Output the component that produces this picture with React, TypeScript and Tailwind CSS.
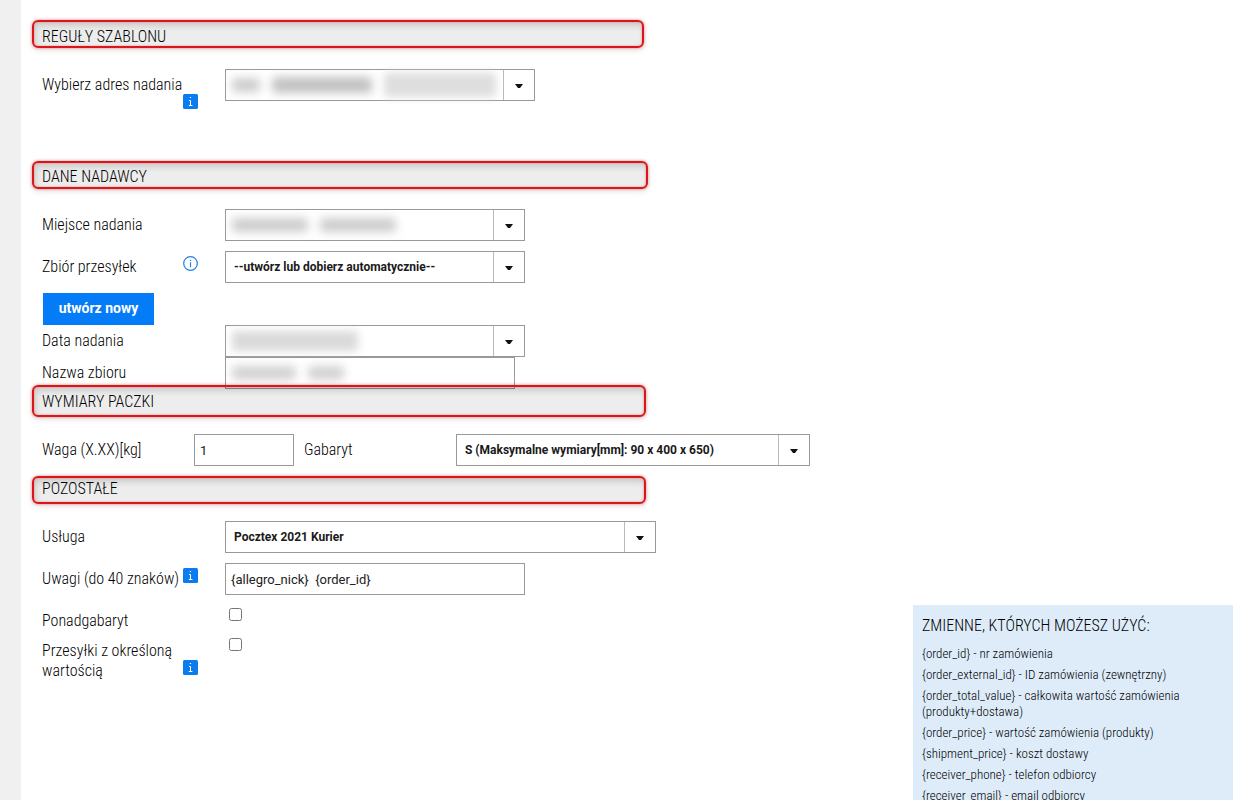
import type { ReactNode } from "react";

const LABEL = "font-['Roboto_Condensed','Roboto',sans-serif] font-light text-[16px] leading-5 text-black";

function Banner({ children, className = "" }: { children: ReactNode; className?: string }) {
  return (
    <h2
      className={`relative -ml-[10px] flex items-center rounded-md border-2 border-[#d9161b] bg-black/7 pl-2 shadow-[0_0_3px_rgba(230,60,60,0.6),0_2px_6px_rgba(0,0,0,0.12),inset_0_0_2px_rgba(240,90,80,0.7),inset_2px_4px_6px_rgba(0,0,0,0.14)] ${LABEL} ${className}`}
    >
      {children}
    </h2>
  );
}

function InfoBadge({ className = "" }: { className?: string }) {
  return (
    <svg role="img" aria-label="Informacja" viewBox="0 0 15 15" className={`size-[15px] ${className}`}>
      <rect width="15" height="15" rx="1.5" fill="#0a7cf0" />
      <path d="M6 6.5h1.5v4.5M5.8 11.5h3.6M6.8 3.5h1.3" stroke="#fff" strokeWidth="1" fill="none" />
    </svg>
  );
}

function InfoCircle({ className = "" }: { className?: string }) {
  return (
    <svg role="img" aria-label="Informacja" viewBox="0 0 15 15" className={`size-[15px] ${className}`}>
      <circle cx="7.5" cy="7.5" r="6.8" stroke="#2381e3" strokeWidth="1.2" fill="none" />
      <path d="M7.5 6.2v5M7.5 3.7v1.4" stroke="#2381e3" strokeWidth="1.2" />
    </svg>
  );
}

type RowProps = {
  id: string;
  label: ReactNode;
  icon?: ReactNode;
  children: ReactNode;
  className?: string;
  labelPadding?: string;
};

function Row({ id, label, icon, children, className = "", labelPadding = "pt-[6px]" }: RowProps) {
  return (
    <div className={`grid min-h-8 grid-cols-[141px_42px_1fr] ${className}`}>
      <label htmlFor={id} className={`${labelPadding} ${LABEL}`}>
        {label}
      </label>
      <div>{icon}</div>
      <div>{children}</div>
    </div>
  );
}

function Select({ id, value, className, children }: { id: string; value: string; className: string; children?: ReactNode }) {
  return (
    <div className={`relative h-8 ${className}`}>
      <select
        id={id}
        className="h-8 w-full appearance-none border border-[#999] bg-white px-2 font-['Roboto',sans-serif] text-[12px] font-bold text-[#1a1a1a]"
      >
        <option>{value}</option>
      </select>
      {children}
      <span className="pointer-events-none absolute inset-y-px right-px flex w-[31px] items-center justify-center border-l border-[#bbb]">
        <svg viewBox="0 0 8 4" className="mt-px h-[4px] w-[8px]">
          <path d="M0 0h8L5 4H3z" fill="#111" />
        </svg>
      </span>
    </div>
  );
}

function Masked({ bars }: { bars: string[] }) {
  return (
    <span aria-hidden="true" className="pointer-events-none absolute inset-y-1 left-[7px] flex items-center gap-3">
      {bars.map((bar, i) => (
        <span key={i} className={`rounded-sm ${bar}`} />
      ))}
    </span>
  );
}

const variables = [
  "{order_id} - nr zamówienia",
  "{order_external_id} - ID zamówienia (zewnętrzny)",
  "{order_total_value} - całkowita wartość zamówienia (produkty+dostawa)",
  "{order_price} - wartość zamówienia (produkty)",
  "{shipment_price} - koszt dostawy",
  "{receiver_phone} - telefon odbiorcy",
  "{receiver_email} - email odbiorcy",
];

const INPUT = "h-8 border border-[#999] bg-transparent px-[5px] font-['Roboto',sans-serif] text-[13px] text-[#222]";

export default function App() {
  return (
    <div className="flex min-h-screen bg-white">
      <div className="w-[21px] shrink-0 bg-[#f0f0f0]" />
      <form className="min-w-0 flex-1 pt-5 pl-[21px]">
        <Banner className="h-7 w-[612px] pt-1.5">REGUŁY SZABLONU</Banner>
        <Row id="adres" label="Wybierz adres nadania" icon={<InfoBadge className="mt-[25px]" />} className="mt-[21px]">
          <Select id="adres" value="" className="w-[310px]">
            <Masked bars={["h-3.5 w-7 bg-[#cdcdcd] blur-[5px]", "h-4 w-[100px] bg-[#c2c2c2] blur-[5px]", "h-6 w-[112px] bg-[#dedede] blur-[4px]"]} />
          </Select>
        </Row>

        <Banner className="mt-[52px] h-7 w-[616px] pt-1">DANE NADAWCY</Banner>
        <Row id="miejsce" label="Miejsce nadania" className="mt-5">
          <Select id="miejsce" value="" className="w-[300px]">
            <Masked bars={["h-3.5 w-[76px] bg-[#cdcdcd] blur-[5px]", "h-3.5 w-[76px] bg-[#cdcdcd] blur-[5px]"]} />
          </Select>
        </Row>
        <Row id="zbior" label="Zbiór przesyłek" icon={<InfoCircle className="mt-[5px]" />} className="mt-[10px]">
          <Select id="zbior" value="--utwórz lub dobierz automatycznie--" className="w-[300px]" />
        </Row>
        <button
          type="button"
          className="mt-[10px] ml-px block h-8 w-[111px] bg-[#047cf8] pb-0.5 font-['Roboto',sans-serif] text-[14px] leading-5 font-bold text-white"
        >
          utwórz nowy
        </button>
        <Row id="data" label="Data nadania">
          <Select id="data" value="" className="w-[300px]">
            <Masked bars={["h-5 w-[126px] bg-[#dadada] blur-[4px]"]} />
          </Select>
        </Row>
        <Row id="nazwa" label="Nazwa zbioru">
          <div className="relative h-8 w-[290px]">
            <input id="nazwa" type="text" className={`block w-full ${INPUT}`} />
            <Masked bars={["h-3.5 w-[64px] bg-[#d2d2d2] blur-[5px]", "h-3.5 w-9 bg-[#d2d2d2] blur-[5px]"]} />
          </div>
        </Row>

        <Banner className="-mt-1 h-8 w-[614px] pt-0.5">WYMIARY PACZKI</Banner>
        <div className="mt-[17px] flex items-start">
          <label htmlFor="waga" className={`w-[152px] pt-[6px] ${LABEL}`}>
            Waga (X.XX)[kg]
          </label>
          <input id="waga" type="text" defaultValue="1" className={`w-[100px] ${INPUT}`} />
          <label htmlFor="gabaryt" className={`ml-[10px] w-[152px] pt-[6px] ${LABEL}`}>
            Gabaryt
          </label>
          <Select id="gabaryt" value="S (Maksymalne wymiary[mm]: 90 x 400 x 650)" className="w-[354px]" />
        </div>

        <Banner className="mt-[10px] h-7 w-[614px] pb-0.5">POZOSTAŁE</Banner>
        <Row id="usluga" label="Usługa" className="mt-[17px]">
          <Select id="usluga" value="Pocztex 2021 Kurier" className="w-[431px]" />
        </Row>
        <Row id="uwagi" label="Uwagi (do 40 znaków)" icon={<InfoBadge className="mt-[5px]" />} className="mt-[10px]">
          <input id="uwagi" type="text" defaultValue="{allegro_nick}  {order_id}" className={`block w-[300px] ${INPUT}`} />
        </Row>
        <Row id="ponad" label="Ponadgabaryt" className="mt-[10px]">
          <input id="ponad" type="checkbox" className="mt-[3px] ml-1 block size-[13px]" />
        </Row>
        <Row
          id="wartosc"
          label="Przesyłki z określoną wartością"
          labelPadding="pt-1"
          icon={<InfoBadge className="mt-[23px]" />}
        >
          <input id="wartosc" type="checkbox" className="mt-px ml-1 block size-[13px]" />
        </Row>
      </form>

      <aside className="mt-[605px] mr-[11px] w-[320px] shrink-0 bg-[#deecfa] px-[9px] pt-[11px] pb-4">
        <h3 className={LABEL}>ZMIENNE, KTÓRYCH MOŻESZ UŻYĆ:</h3>
        <ul className="mt-[10px] flex flex-col gap-[5px] font-['Roboto_Condensed','Roboto',sans-serif] text-[13px] leading-4 font-light text-black">
          {variables.map((v) => (
            <li key={v} className="pr-6">
              {v}
            </li>
          ))}
        </ul>
      </aside>
    </div>
  );
}
